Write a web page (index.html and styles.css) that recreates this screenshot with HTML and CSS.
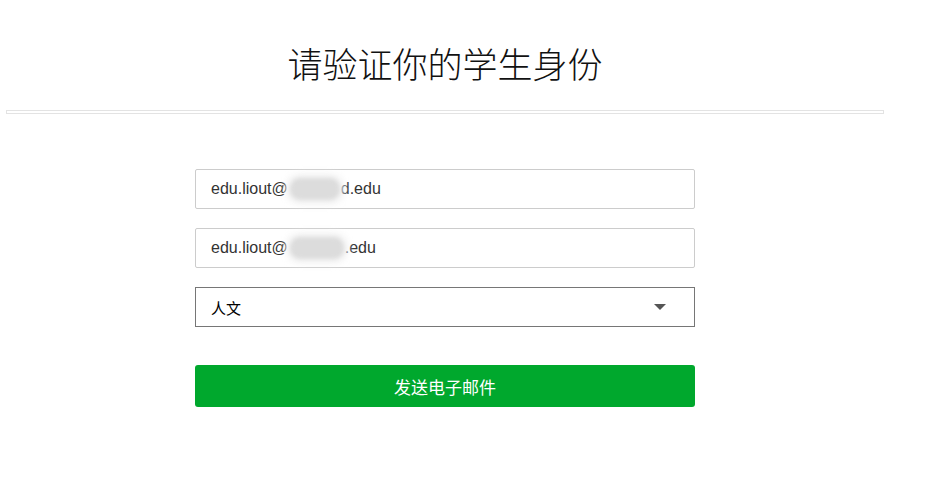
FILE: index.html
```html
<!DOCTYPE html>
<html lang="zh-CN">
<head>
<meta charset="utf-8">
<title>请验证你的学生身份</title>
<link rel="stylesheet" href="styles.css">
</head>
<body>
<div class="page">
  <header class="header">
    <h1 class="title">请验证你的学生身份</h1>
    <div class="divider"></div>
  </header>
  <form class="form">
    <div class="field">edu.liout@<span class="blur blur-a"></span>d.edu</div>
    <div class="field">edu.liout@<span class="blur blur-b"></span>.edu</div>
    <div class="select">
      <span class="select-text">人文</span>
      <span class="caret"></span>
    </div>
    <button type="button" class="submit">发送电子邮件</button>
  </form>
</div>
</body>
</html>
```

FILE: styles.css
```css
html, body {
  margin: 0;
  padding: 0;
  background: #fff;
}
body {
  font-family: "Liberation Sans", Arial, "Noto Sans CJK SC", sans-serif;
}
.page {
  width: 890px;
}
.header {
  padding-top: 42px;
}
.title {
  margin: 0;
  text-align: center;
  font-family: "Noto Sans CJK SC", sans-serif;
  font-weight: 300;
  font-size: 35px;
  line-height: 42px;
  color: #111;
}
.divider {
  margin: 26px 6px 0 6px;
  height: 2px;
  border: 1px solid #e3e3e3;
  background: #fff;
}
.form {
  width: 500px;
  margin: 55px auto 0 auto;
  display: flex;
  flex-direction: column;
}
.field {
  box-sizing: border-box;
  height: 40px;
  border: 1px solid #cccccc;
  border-radius: 2px;
  padding: 0 15px;
  display: flex;
  align-items: center;
  font-size: 16px;
  color: #333;
  margin-bottom: 19px;
}
.blur {
  display: inline-block;
  height: 22px;
  background: #dcdcdc;
  border-radius: 10px;
  filter: blur(2px);
  box-shadow: 0 0 6px 4px #f1f1f1;
}
.blur-a {
  width: 50px;
  margin: 0 1px 0 2px;
}
.blur-b {
  width: 54px;
  margin: 0 1px 0 2px;
}
.select {
  box-sizing: border-box;
  height: 40px;
  border: 1px solid #767676;
  padding: 0 28px 0 15px;
  display: flex;
  align-items: center;
  justify-content: space-between;
  font-family: "Noto Sans CJK SC", sans-serif;
  font-size: 15px;
  color: #000;
}
.caret {
  width: 0;
  height: 0;
  border-left: 6px solid transparent;
  border-right: 6px solid transparent;
  border-top: 6px solid #555;
}
.submit {
  margin-top: 38px;
  height: 42px;
  border: none;
  border-radius: 3px;
  background: #00a82d;
  color: #fff;
  font-family: "Noto Sans CJK SC", sans-serif;
  font-size: 17px;
  padding: 0;
  cursor: pointer;
}
```
